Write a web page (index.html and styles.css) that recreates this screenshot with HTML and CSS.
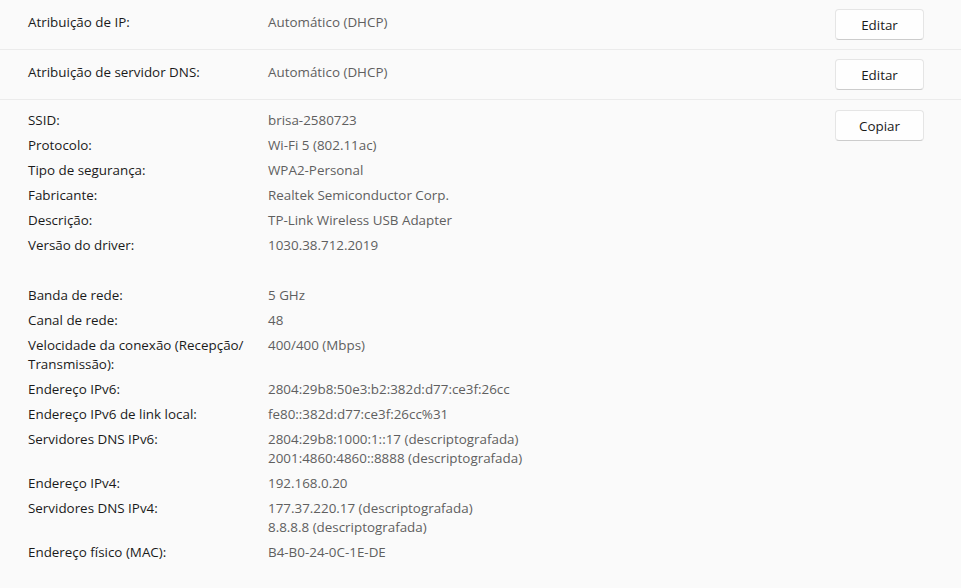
FILE: index.html
```html
<!DOCTYPE html>
<html lang="pt-BR">
<head>
  <meta charset="utf-8" />
  <title>Propriedades de rede</title>
  <link rel="stylesheet" href="styles.css">
</head>
<body>
  <div class="card">
    <div class="row">
      <div class="label">Atribuição de IP:</div>
      <div class="value">Automático (DHCP)</div>
      <button class="btn">Editar</button>
    </div>
    <div class="row">
      <div class="label">Atribuição de servidor DNS:</div>
      <div class="value">Automático (DHCP)</div>
      <button class="btn">Editar</button>
    </div>
    <div class="props">
      <dl class="details">
        <dt>SSID:</dt><dd>brisa-2580723</dd>
        <dt>Protocolo:</dt><dd>Wi-Fi 5 (802.11ac)</dd>
        <dt>Tipo de segurança:</dt><dd>WPA2-Personal</dd>
        <dt>Fabricante:</dt><dd>Realtek Semiconductor Corp.</dd>
        <dt>Descrição:</dt><dd>TP-Link Wireless USB Adapter</dd>
        <dt>Versão do driver:</dt><dd>1030.38.712.2019</dd>
        <dt class="blank"></dt><dd class="blank"></dd>
        <dt>Banda de rede:</dt><dd>5 GHz</dd>
        <dt>Canal de rede:</dt><dd>48</dd>
        <dt>Velocidade da conexão (Recepção/<br>Transmissão):</dt><dd>400/400 (Mbps)</dd>
        <dt>Endereço IPv6:</dt><dd>2804:29b8:50e3:b2:382d:d77:ce3f:26cc</dd>
        <dt>Endereço IPv6 de link local:</dt><dd>fe80::382d:d77:ce3f:26cc%31</dd>
        <dt>Servidores DNS IPv6:</dt><dd>2804:29b8:1000:1::17 (descriptografada)<br>2001:4860:4860::8888 (descriptografada)</dd>
        <dt>Endereço IPv4:</dt><dd>192.168.0.20</dd>
        <dt>Servidores DNS IPv4:</dt><dd>177.37.220.17 (descriptografada)<br>8.8.8.8 (descriptografada)</dd>
        <dt>Endereço físico (MAC):</dt><dd>B4-B0-24-0C-1E-DE</dd>
      </dl>
      <button class="btn">Copiar</button>
    </div>
  </div>
</body>
</html>
```

FILE: styles.css
```css
*{margin:0;padding:0;box-sizing:border-box;}
html,body{width:100%;height:100%;}
body{
  background:#fafafa;
  font-family:"Open Sans","Noto Sans",sans-serif;
  font-size:13.4px;
  color:#1a1a1a;
}
.card{
  width:100%;
}
.row{
  display:flex;
  align-items:center;
  height:50px;
  padding:0 37px 0 28px;
  border-bottom:1px solid #ebebeb;
}
.label{
  width:240px;
  flex-shrink:0;
  padding-bottom:5px;
}
.value{
  flex:1;
  color:#5f5f5f;
  padding-bottom:5px;
}
.btn{
  width:89px;
  height:31px;
  background:#fefefe;
  border:1px solid #e5e5e5;
  border-bottom-color:#cccccc;
  border-radius:4px;
  font-family:inherit;
  font-size:13.4px;
  color:#1a1a1a;
}
.props{
  display:flex;
  align-items:flex-start;
  padding:10px 37px 0 28px;
}
.details{
  flex:1;
  display:grid;
  grid-template-columns:240px auto;
  row-gap:6px;
  line-height:19px;
  margin-top:1px;
}
.details dd{
  color:#5f5f5f;
}
.blank{
  height:19px;
}
```
